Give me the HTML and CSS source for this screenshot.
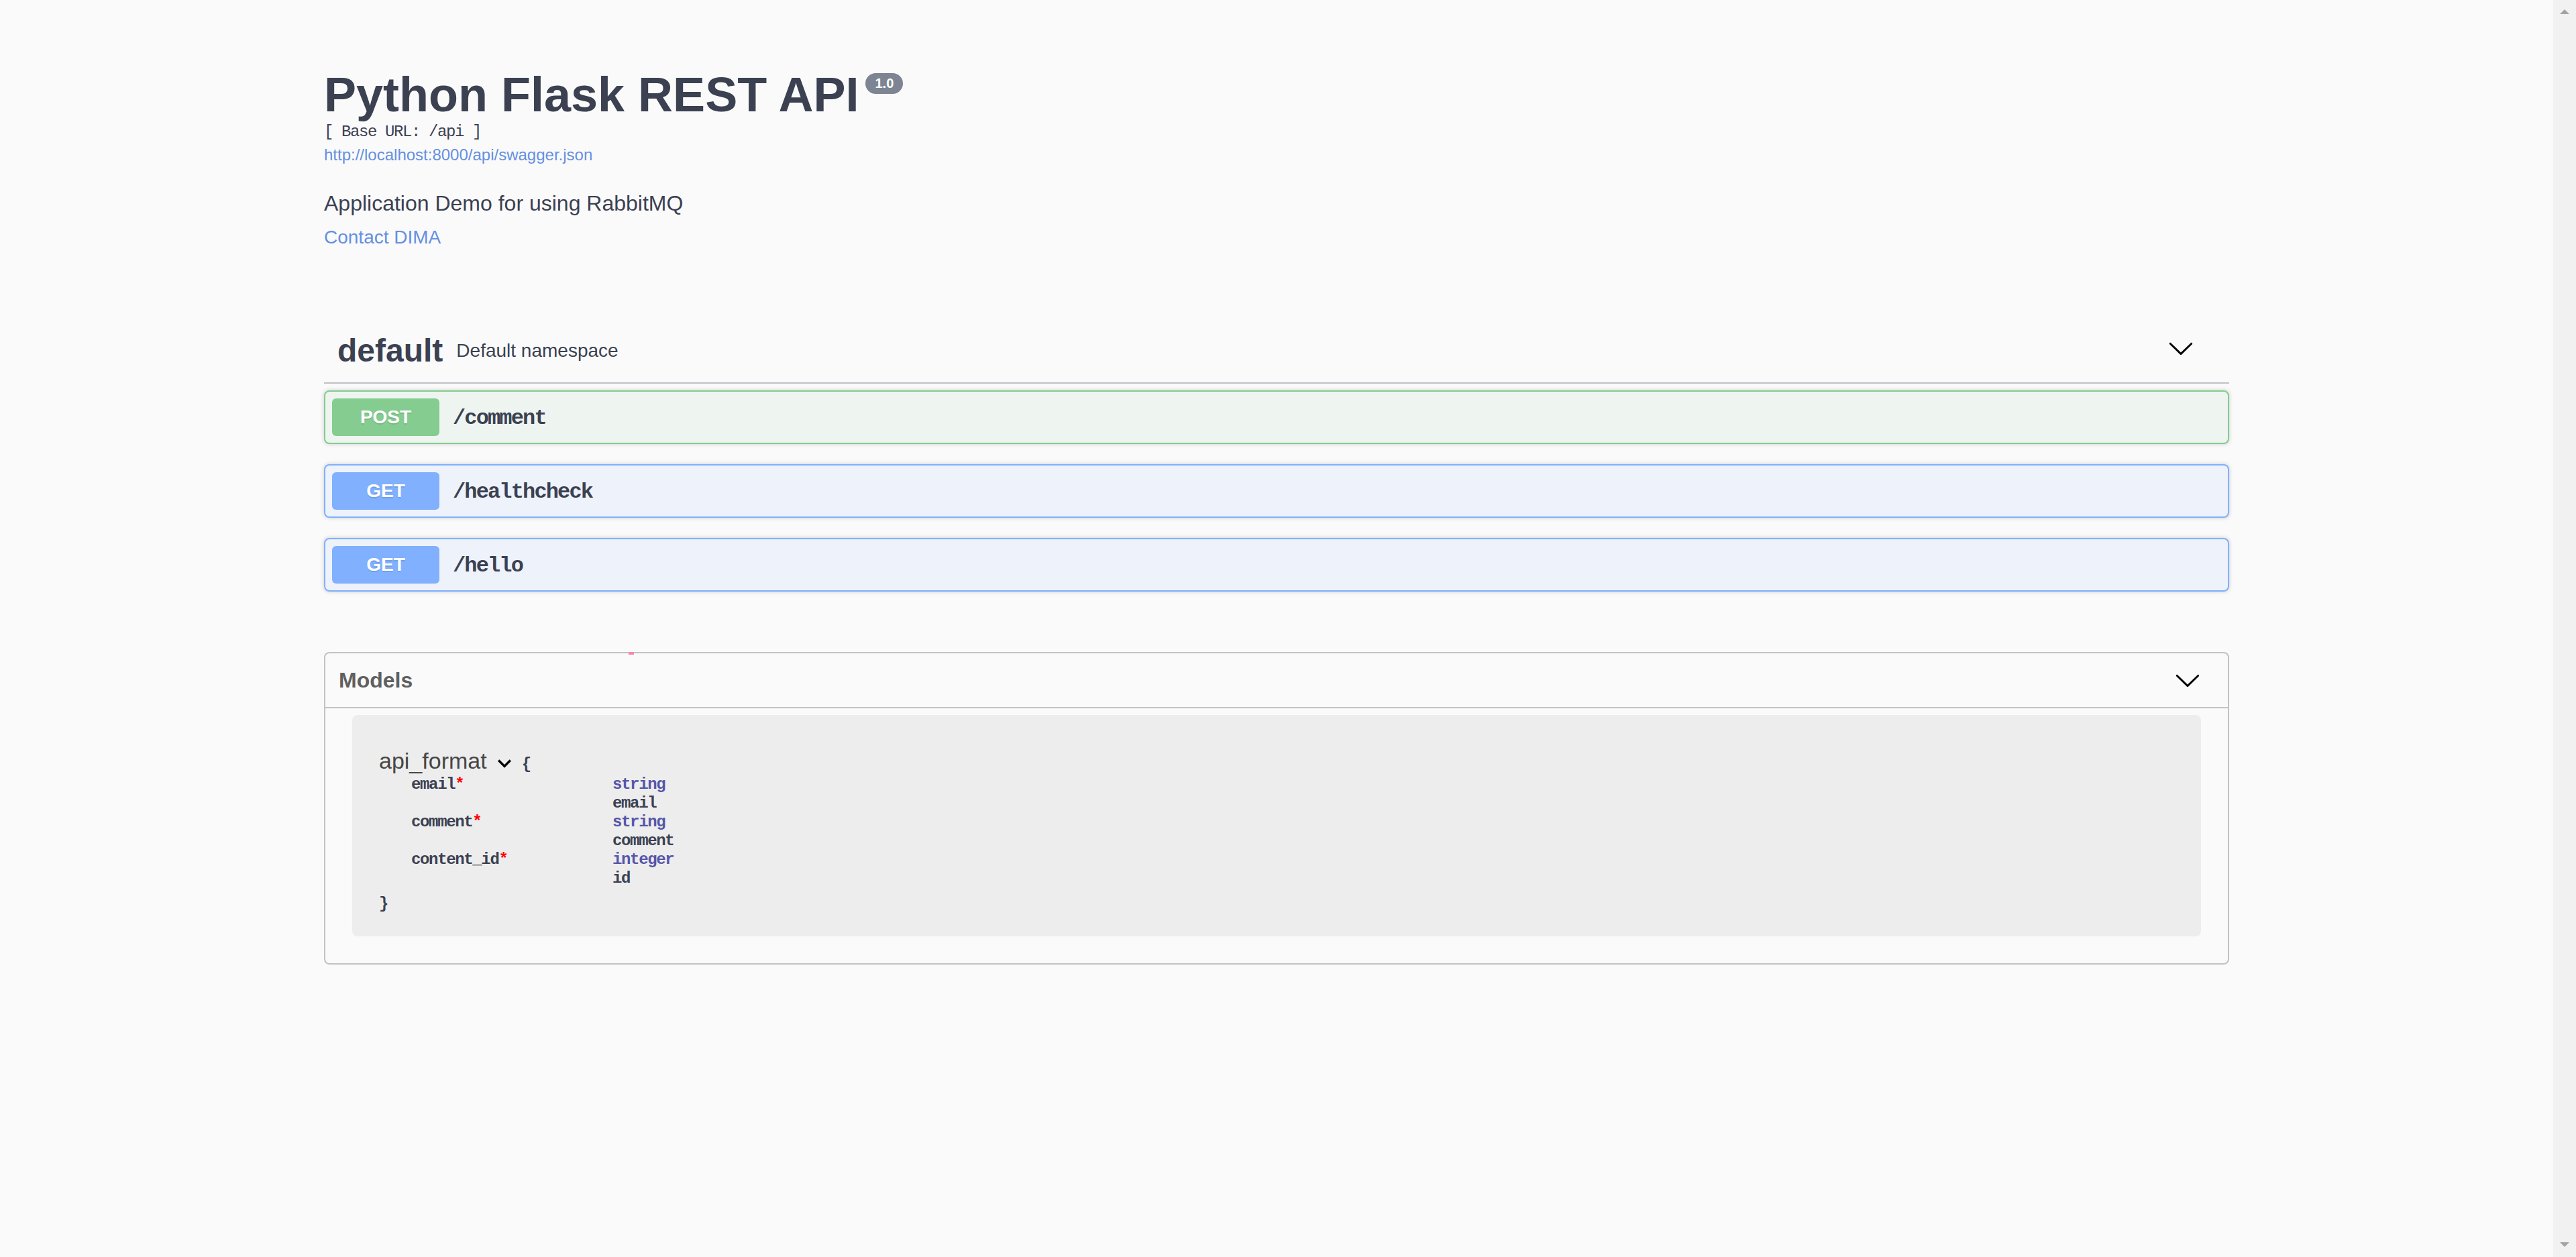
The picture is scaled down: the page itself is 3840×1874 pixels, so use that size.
FILE: index.html
```html
<!DOCTYPE html>
<html lang="en">
<head>
<meta charset="utf-8">
<title>Python Flask REST API</title>
<link rel="stylesheet" href="styles.css">
</head>
<body>
<div class="page">
  <div class="swagger-ui">
    <div class="wrapper">
      <div class="info">
        <hgroup class="main">
          <h2 class="title">Python Flask REST API<span class="version"><pre>1.0</pre></span></h2>
          <pre class="base-url">[ Base URL: /api ]</pre>
          <a class="spec-url" href="#">http://localhost:8000/api/swagger.json</a>
        </hgroup>
        <div class="description"><div class="markdown"><p>Application Demo for using RabbitMQ</p></div></div>
        <div class="contact"><a href="#">Contact DIMA</a></div>
      </div>
    </div>

    <div class="wrapper">
      <section class="tag-section">
        <h3 class="opblock-tag">
          <span class="tag-name">default</span>
          <small>Default namespace</small>
          <button class="expand" type="button" aria-label="collapse">
            <svg class="arrow" width="20" height="20" viewBox="0 0 20 20"><path d="M17.418 6.109c.272-.268.709-.268.979 0s.271.701 0 .969l-7.908 7.83c-.27.268-.707.268-.979 0l-7.908-7.83c-.27-.268-.27-.701 0-.969.271-.268.709-.268.979 0L10 13.25l7.418-7.141z"/></svg>
          </button>
        </h3>
        <div class="opblock opblock-post">
          <div class="summary"><span class="method">POST</span><span class="path">/comment</span></div>
        </div>
        <div class="opblock opblock-get">
          <div class="summary"><span class="method">GET</span><span class="path">/healthcheck</span></div>
        </div>
        <div class="opblock opblock-get">
          <div class="summary"><span class="method">GET</span><span class="path">/hello</span></div>
        </div>
      </section>

      <section class="models">
        <span class="mark"></span>
        <h4><span class="models-label">Models</span>
          <svg class="arrow" width="20" height="20" viewBox="0 0 20 20"><path d="M17.418 6.109c.272-.268.709-.268.979 0s.271.701 0 .969l-7.908 7.83c-.27.268-.707.268-.979 0l-7.908-7.83c-.27-.268-.27-.701 0-.969.271-.268.709-.268.979 0L10 13.25l7.418-7.141z"/></svg>
        </h4>
        <div class="model-container">
          <div class="model-head"><span class="model-title">api_format</span><span class="toggle"><svg width="20" height="20" viewBox="0 0 24 24"><path d="M7.41 8.59L12 13.17l4.59-4.58L18 10l-6 6-6-6 1.41-1.41z"/></svg></span><span class="brace">{</span></div>
          <div class="props">
            <div class="prop-name">email<span class="star">*</span></div>
            <div class="prop-val"><span class="prop-type">string</span><span class="prop-format">email</span></div>
            <div class="prop-name">comment<span class="star">*</span></div>
            <div class="prop-val"><span class="prop-type">string</span><span class="prop-format">comment</span></div>
            <div class="prop-name">content_id<span class="star">*</span></div>
            <div class="prop-val"><span class="prop-type">integer</span><span class="prop-format">id</span></div>
          </div>
          <div class="brace-close">}</div>
        </div>
      </section>
    </div>
  </div>
</div>
<div class="scrollbar"><span class="sb-arrow sb-up"></span><span class="sb-arrow sb-down"></span></div>
</body>
</html>
```
FILE: styles.css
```css
html, body {
  margin: 0;
  padding: 0;
}

body {
  display: flex;
  height: 100vh;
  overflow: hidden;
  background: #fafafa;
}

.page {
  flex: 1;
  min-width: 0;
}

.swagger-ui {
  zoom: 2;
  font-family: "Liberation Sans", Arial, sans-serif;
  font-size: 16px;
  color: #3b4151;
}

.wrapper {
  box-sizing: border-box;
  max-width: 1460px;
  margin: 0 auto;
  padding: 0 20px;
}

/* ---------- info ---------- */
.info {
  margin: 50px 0 52px;
}

.info hgroup.main {
  display: block;
  margin: 0 0 19px;
  font-size: 16px;
  line-height: normal;
}

.title {
  margin: 0;
  font-size: 36px;
  font-weight: 700;
  line-height: normal;
  color: #3b4151;
}

.version {
  display: inline-block;
  position: relative;
  top: -5px;
  margin: 0 0 0 5px;
  padding: 2px 7px;
  font-size: 10px;
  vertical-align: super;
  border-radius: 57px;
  background: #7d8492;
}

.version pre {
  margin: 0;
  padding: 0;
  font-family: "Liberation Sans", Arial, sans-serif;
  font-size: 10px;
  line-height: normal;
  color: #fff;
}

.base-url {
  margin: 0;
  padding-top: 1px;
  font-family: "Liberation Mono", monospace;
  font-size: 12px;
  line-height: 13px;
  font-weight: 400;
  letter-spacing: -0.7px;
  color: #3b4151;
}

.spec-url {
  font-size: 12px;
  color: #6590e2;
  text-decoration: none;
}

.markdown p {
  margin: 0 0 6px;
  font-size: 16px;
  line-height: normal;
  color: #3b4151;
}

.contact {
  font-size: 16px;
  line-height: normal;
}

.contact a {
  font-size: 14px;
  color: #6590e2;
  text-decoration: none;
}

/* ---------- operations ---------- */
.tag-section {
  display: flex;
  flex-direction: column;
}

.opblock-tag {
  display: flex;
  align-items: center;
  margin: 0 0 5px;
  padding: 10px 20px 10px 10px;
  border-bottom: 1px solid rgba(59, 65, 81, 0.3);
  font-size: 24px;
  font-weight: 700;
  line-height: normal;
  color: #3b4151;
}

.opblock-tag small {
  flex: 1;
  padding: 0 10px;
  font-size: 14px;
  font-weight: 400;
  line-height: normal;
}

.expand {
  display: flex;
  margin: 0 0 0 10px;
  padding: 0 6px 4px;
  border: 0;
  background: none;
}

.arrow {
  display: block;
  fill: #000;
}

.opblock {
  margin: 0 0 15px;
  border: 1px solid #000;
  border-radius: 4px;
  box-shadow: 0 0 3px rgba(0, 0, 0, 0.19);
}

.opblock-post {
  border-color: #84cc90;
  background: #eef5f0;
}

.opblock-post .method {
  background: #84cc90;
}

.opblock-get {
  border-color: #80b0fe;
  background: #eef2fa;
}

.opblock-get .method {
  background: #80b0fe;
}

.summary {
  display: flex;
  align-items: center;
  padding: 5px;
}

.method {
  box-sizing: border-box;
  min-width: 80px;
  padding: 6px 15px;
  border-radius: 3px;
  font-size: 14px;
  font-weight: 700;
  line-height: 16px;
  text-align: center;
  color: #fff;
  text-shadow: 0 1px 0 rgba(0, 0, 0, 0.1);
}

.path {
  padding: 1px 10px 0;
  font-family: "Liberation Mono", monospace;
  font-size: 16px;
  font-weight: 700;
  letter-spacing: -0.93px;
  color: #3b4151;
}

/* ---------- models ---------- */
.models {
  position: relative;
  margin: 30px 0;
  padding: 0 0 20px;
  border: 1px solid rgba(59, 65, 81, 0.3);
  border-radius: 4px;
}

.mark {
  position: absolute;
  top: -1px;
  left: 226px;
  width: 4px;
  height: 2px;
  background: #fb86a4;
}

.models h4 {
  display: flex;
  align-items: center;
  margin: 0 0 5px;
  padding: 10px 20px 10px 10px;
  border-bottom: 1px solid rgba(59, 65, 81, 0.3);
  font-size: 16px;
  font-weight: 700;
  line-height: normal;
  color: #606060;
}

.models-label {
  flex: 1;
}

.model-container {
  margin: 0 20px;
  padding: 20px 20px 17px;
  border-radius: 4px;
  background: rgba(0, 0, 0, 0.05);
}

.model-head {
  font-size: 16px;
  line-height: normal;
}

.model-title {
  font-size: 17px;
  color: #474747;
}

.toggle {
  display: inline-block;
  position: relative;
  top: 6px;
  width: 20px;
  height: 20px;
  margin: 0 3px;
}

.toggle svg {
  display: block;
  fill: #000;
}

.brace,
.brace-close,
.props {
  font-family: "Liberation Mono", monospace;
  font-size: 12px;
  font-weight: 700;
  line-height: 14px;
  letter-spacing: -0.68px;
  color: #3b4151;
}

.props {
  display: grid;
  grid-template-columns: 150px auto;
  margin: 1px 0 5px;
  padding-left: 24px;
}

.prop-val span {
  display: block;
}

.prop-type {
  color: #55a;
}

.prop-format {
  color: #3b4151;
}

.star {
  color: #f00;
}

/* ---------- scrollbar ---------- */
.scrollbar {
  display: flex;
  flex-direction: column;
  justify-content: space-between;
  align-items: center;
  flex: 0 0 34px;
  box-sizing: border-box;
  padding: 14px 0 15px;
  background: #f1f1f1;
}

.sb-arrow {
  width: 0;
  height: 0;
  border-left: 7px solid transparent;
  border-right: 7px solid transparent;
}

.sb-up {
  border-bottom: 7px solid #a3a3a3;
}

.sb-down {
  border-top: 7px solid #a3a3a3;
}
```
